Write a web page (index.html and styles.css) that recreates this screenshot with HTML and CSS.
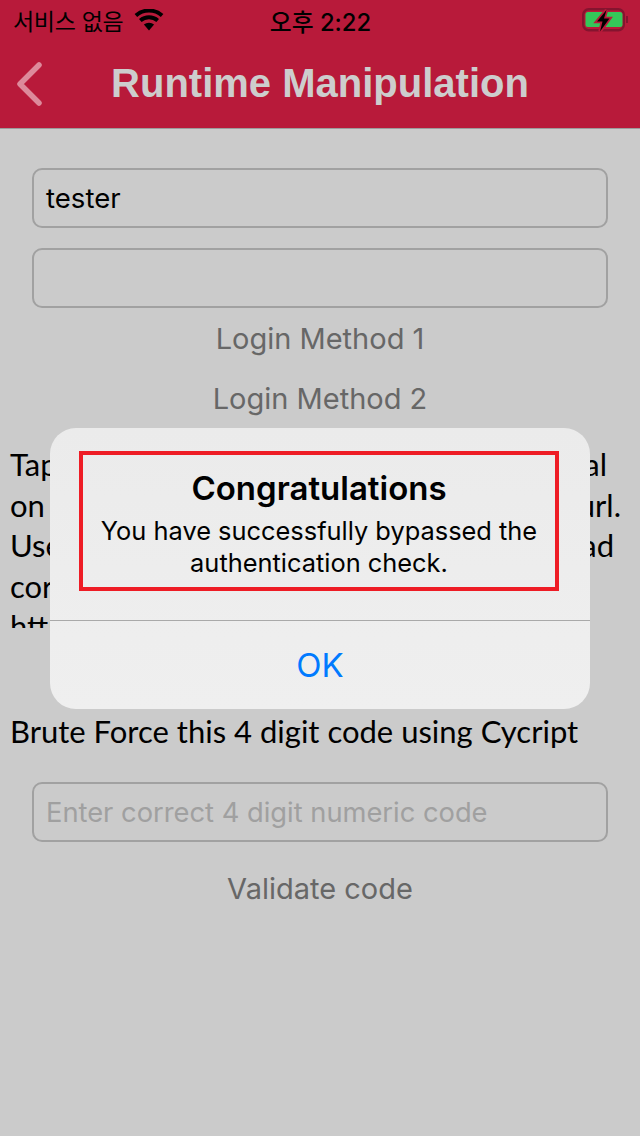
FILE: index.html
```html
<!DOCTYPE html>
<html lang="ko">

<head>
    <meta charset="UTF-8">
    <meta name="viewport" content="width=device-width, initial-scale=1.0">
    <title>Runtime Manipulation</title>
    <link rel="stylesheet" href="styles.css">
</head>

<body>
    <div class="screen">
        <header class="header">
            <div class="status">
                <div class="status-left">
                    <span>서비스 없음</span>
                    <svg class="wifi" width="30" height="22" viewBox="0 0 30 22">
                        <path d="M15 21.5 9.9 15.6a7.6 7.6 0 0 1 10.2 0z" fill="#000" />
                        <path d="M7.6 13A11.2 11.2 0 0 1 22.4 13l2.6-3A15.2 15.2 0 0 0 5 10z" fill="#000" />
                        <path d="M3.2 8A17.8 17.8 0 0 1 26.8 8L29.4 5A21.7 21.7 0 0 0 .6 5z" fill="#000" />
                    </svg>
                </div>
                <div class="status-time">오후 2:22</div>
                <div class="status-right">
                    <svg width="46" height="24" viewBox="0 0 46 24">
                        <rect x="1.2" y="1.2" width="40.6" height="21" rx="5.5" fill="none" stroke="#85142f" stroke-width="2.4" />
                        <rect x="44" y="8" width="2" height="7" fill="#85142f" />
                        <rect x="3.5" y="4" width="37" height="15" rx="2.5" fill="#34c759" />
                        <path d="M24.500 2 15 13.500h5.500L18 23.500l9.500-13H22z" fill="#000" stroke="#b81a3a" stroke-width="3.500" paint-order="stroke" />
                    </svg>
                </div>
            </div>
            <nav class="nav">
                <svg class="back" width="28" height="44" viewBox="0 0 28 44">
                    <path d="M23 3 4 22l19 19" fill="none" stroke="#dd8a9b" stroke-width="5.500" stroke-linecap="round" stroke-linejoin="round" />
                </svg>
                <h1 class="nav-title">Runtime Manipulation</h1>
            </nav>
        </header>

        <main class="content">
            <div class="field field-value">tester</div>
            <div class="field"></div>
            <button class="link link-first">Login Method 1</button>
            <button class="link">Login Method 2</button>

            <div class="textview">
                <p class="line"><span>Tap</span><span>al</span></p>
                <p class="line"><span>on</span><span>url.</span></p>
                <p class="line"><span>Use</span><span>ad</span></p>
                <p class="line"><span>cor</span></p>
                <p class="line"><span>http</span></p>
            </div>

            <p class="brute">Brute Force this 4 digit code using Cycript</p>
            <div class="field field-hint">Enter correct 4 digit numeric code</div>
            <button class="link link-validate">Validate code</button>
        </main>

        <div class="alert">
            <div class="alert-body">
                <h2 class="alert-title">Congratulations</h2>
                <p class="alert-msg">You have successfully bypassed the authentication check.</p>
            </div>
            <button class="alert-ok">OK</button>
        </div>
    </div>
</body>

</html>
```
FILE: styles.css
```css
* {
    box-sizing: border-box;
}

body {
    margin: 0;
    padding: 0;
    font-family: Inter, "Liberation Sans", sans-serif;
}

p, h1, h2 {
    margin: 0;
}

button {
    border: 0;
    background: none;
    padding: 0;
    font-family: inherit;
}

.screen {
    position: relative;
    width: 640px;
    height: 1136px;
    overflow: hidden;
    background-color: #cbcbcb;
}

.header {
    height: 129px;
    background-color: #b81a3a;
    border-bottom: 1px solid #9c9c9c;
}

.status {
    height: 40px;
    display: flex;
    align-items: center;
    justify-content: space-between;
    padding: 0 12px 0 13px;
    font-size: 24px;
    color: #000;
}

.status-left {
    width: 200px;
    display: flex;
    align-items: center;
    gap: 11px;
    font-family: "Noto Sans CJK KR", sans-serif;
    font-size: 23px;
    letter-spacing: -.3px;
}

.status-time {
    font-family: Inter, "Noto Sans CJK KR", sans-serif;
    font-size: 23.8px;
    font-weight: 500;
}

.status-right {
    width: 200px;
    display: flex;
    justify-content: flex-end;
}

.status-right svg {
    display: block;
}

.nav {
    position: relative;
    height: 88px;
    padding-bottom: 2px;
    display: flex;
    align-items: center;
    justify-content: center;
}

.back {
    position: absolute;
    left: 16px;
    top: 22px;
}

.nav-title {
    font-family: "Liberation Sans", Arial, sans-serif;
    font-size: 40px;
    font-weight: 700;
    color: #cdcdcd;
}

.content {
    display: flex;
    flex-direction: column;
    align-items: center;
    padding-top: 39px;
}

.field {
    width: 576px;
    height: 60px;
    margin-bottom: 20px;
    padding: 0 12px;
    border: 2px solid #a1a1a1;
    border-radius: 10px;
    display: flex;
    align-items: center;
    font-size: 27.6px;
    color: #000;
}

.field-hint {
    margin-bottom: 0;
    font-size: 27.3px;
    color: #a0a0a0;
}

.link {
    display: block;
    height: 60px;
    font-size: 29px;
    color: #676767;
}

.link-first {
    margin-top: -20px;
}

.link-validate {
    margin-top: 16px;
}

.textview {
    width: 100%;
    height: 184px;
    margin-top: 16px;
    padding: 0 10px;
    overflow: hidden;
    font-family: Lato, "Open Sans", sans-serif;
    font-size: 31px;
    color: #000;
}

.line {
    height: 40.6px;
    line-height: 40.6px;
    display: flex;
    justify-content: space-between;
    white-space: nowrap;
}

.line:nth-child(1) {
    padding-right: 23px;
}

.line:nth-child(2) {
    padding-right: 9px;
}

.line:nth-child(3) {
    padding-right: 16px;
}

.brute {
    width: 100%;
    height: 40px;
    margin-top: 83px;
    margin-bottom: 31px;
    padding: 0 10px;
    line-height: 40px;
    font-family: Lato, "Open Sans", sans-serif;
    font-size: 31px;
    color: #000;
}

/* alert sits over the dimmed page */
.alert {
    position: absolute;
    left: 50px;
    top: 428px;
    width: 540px;
    height: 281px;
    border-radius: 26px;
    background: linear-gradient(#ebebeb, #efefef);
    display: flex;
    flex-direction: column;
}

.alert-body {
    width: 480px;
    height: 140px;
    margin: 23px 0 0 29px;
    border: 4px solid #ee1c25;
    display: flex;
    flex-direction: column;
    align-items: center;
    text-align: center;
    padding: 0 16px;
}

.alert-title {
    margin-top: 13px;
    font-size: 33px;
    line-height: 40px;
    font-weight: 600;
    color: #000;
}

.alert-msg {
    margin-top: 7px;
    font-size: 25.4px;
    line-height: 32px;
    color: #000;
}

.alert-ok {
    height: 89px;
    margin-top: 29px;
    border-top: 1px solid #a9a9a9;
    font-size: 33px;
    color: #007aff;
}
```
